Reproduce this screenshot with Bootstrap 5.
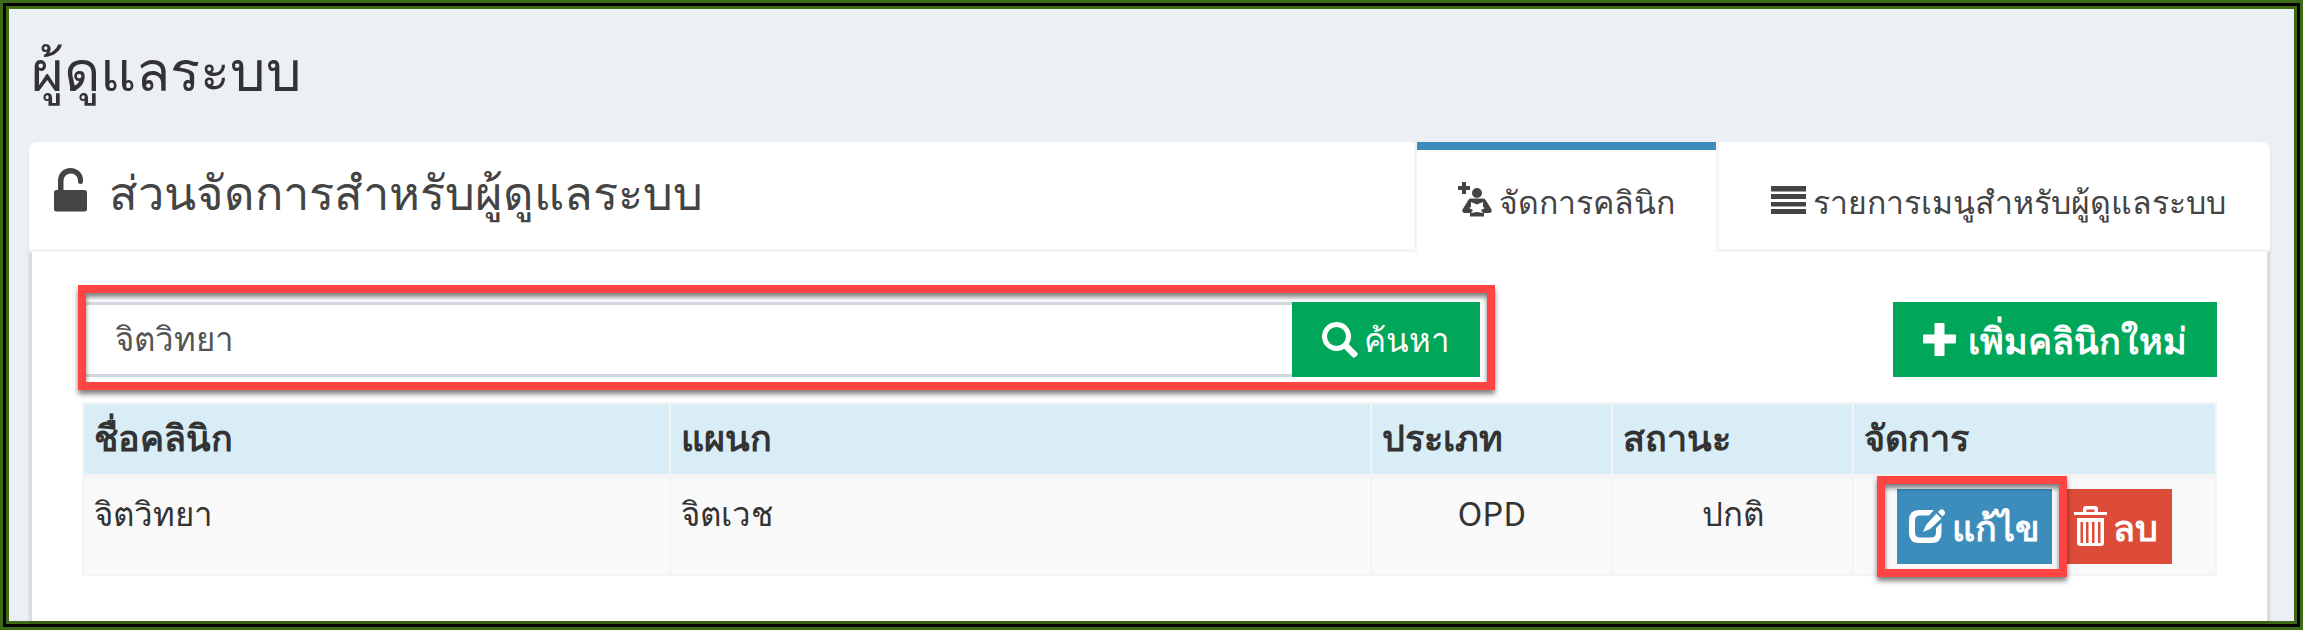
<!DOCTYPE html>
<html lang="th">
<head>
<meta charset="utf-8">
<meta name="viewport" content="width=device-width, initial-scale=1">
<title>ผู้ดูแลระบบ</title>
<link rel="stylesheet" href="https://cdn.jsdelivr.net/npm/bootstrap@5.3.0/dist/css/bootstrap.min.css">
<style>
:root { --line: #f4f4f4; --frame: #3d6b17; --mark-red: #ff4444; }
body { font-family: "Noto Sans CJK SC", sans-serif; font-size: 33px; line-height: 48px; color: #333; }
svg { flex: none; fill: currentColor; }
.app-frame { background: #ecf0f5; border: 3px solid var(--frame); box-shadow: inset 0 0 0 3px #000, inset 0 0 0 6px var(--frame); padding: 6px; }
.page-title { font-size: 56px; line-height: 72px; padding: 22px 22px 39px; margin: 0; }
.panel { margin: 0 24px 0 20px; background: #fff; border-radius: 8px 8px 0 0; box-shadow: 0 3px 3px rgba(0,0,0,.1); }
.panel-top { border-bottom: 3px solid var(--line); color: #444; height: 110px; }
.panel-title { font-size: 47px; line-height: 56px; padding: 20px 0 0 25px; gap: 22px; margin: 0; }
.panel-title svg { margin-top: 6px; }
.tab-link { font-size: 32px; padding: 34px 41px 0; gap: 7px; color: #444; text-decoration: none; border: 3px solid transparent; border-width: 0 3px; height: 107px; }
.tab-link svg { margin-top: 6px; }
.tab-link.active { border-color: var(--line); height: 110px; background: linear-gradient(#3c8dbc, #3c8dbc) 0 0 / 100% 8px no-repeat border-box, #fff; }
.panel-main { border: 3px solid #ddd; border-width: 0 3px; padding: 50px 50px 40px; }
.callout { position: absolute; z-index: 2; border: 8px solid var(--mark-red); box-shadow: 0 4px 5px rgba(0,0,0,.5), inset 0 4px 5px rgba(0,0,0,.5); pointer-events: none; }
.find-box { width: 65.5%; }
.find-box .callout { inset: -17px -15px -13px -4px; }
.find-input { height: 75px; border: 3px solid #d2d6de; border-right: 0; padding: 0 30px; font-size: 33px; color: #555; border-radius: 0; }
.act { height: 75px; border: 0; border-radius: 0; color: #fff; font-size: 33px; line-height: 48px; padding: 0 30px; gap: 6px; display: inline-flex; align-items: center; white-space: nowrap; }
.act span { margin-bottom: 3px; }
.act.fw-bold { font-size: 36px; }
.act-green { background: #00a65a; }
.act-add { gap: 12px; }
.act-blue { background: #3c8dbc; padding: 0 12px; }
.act-red { background: #dd4b39; padding: 0 14px; }
.edit-wrap .callout { inset: -13px -15px -13px -20px; }
.grid-table { margin: 25px 0 0; width: 100%; table-layout: fixed; border-collapse: collapse; color: #333; }
.grid-table th, .grid-table td { border: 2px solid var(--line); padding: 10px; vertical-align: top; line-height: 46px; }
.grid-table th { background: #d9edf7; border-bottom-width: 5px; font-size: 36px; padding: 8px 10px 16px; }
.grid-table td { background: #f9f9f9; }
</style>
</head>
<body>
<main class="app-frame d-flex flex-column min-vh-100">
  <h1 class="page-title fw-normal">ผู้ดูแลระบบ</h1>
  <section class="panel flex-grow-1 d-flex flex-column">
    <div class="panel-top d-flex justify-content-between">
      <h2 class="panel-title d-flex fw-normal">
        <svg width="33" height="44" viewBox="0 0 33 44" aria-hidden="true"><path d="M3 22h1V13C4 5 9.500 0 16.500 0S29 5 29 12v1.500a2.500 2.500 0 0 1-5 0V13c0-4.500-3-7.500-7-7.500S9.500 8.500 9.500 13v9H30.500a2.500 2.500 0 0 1 2.500 2.500V41a2.500 2.500 0 0 1-2.500 2.500h-28A2.500 2.500 0 0 1 0 41V24.500A2.500 2.500 0 0 1 2.500 22z"/></svg>
        <span>ส่วนจัดการสำหรับผู้ดูแลระบบ</span>
      </h2>
      <nav class="d-flex">
        <a href="#" class="tab-link active d-flex">
          <svg width="34" height="35" viewBox="0 0 34 35" aria-hidden="true"><path d="M4 0h4v4h4v4H8v4H4V8H0V4h4z"/><circle cx="19" cy="11" r="5"/><path fill-rule="evenodd" d="M12.500 16.500h13q1.500 0 2.500 2l5.500 9q1 2.500-1.500 3.500h-6v3.500H12V31H6q-2.500-1-1.500-3.500l5.500-9q1-2 2.500-2zM13 20v5l-2 1 4 2-2 3 6-1 6 1-2-3 4-2-2-1v-5l-6 2.500z"/></svg>
          <span>จัดการคลินิก</span>
        </a>
        <a href="#" class="tab-link d-flex ms-2">
          <svg width="35" height="35" viewBox="0 0 35 35" aria-hidden="true"><path d="M0 4h35v5.500H0zM0 12h35v5H0zM0 20h35v4.500H0zM0 27h35v5H0z"/></svg>
          <span>รายการเมนูสำหรับผู้ดูแลระบบ</span>
        </a>
      </nav>
    </div>
    <div class="panel-main flex-grow-1">
      <div class="d-flex justify-content-between">
        <form class="find-box position-relative d-flex">
          <input type="search" class="find-input form-control flex-grow-1" aria-label="ค้นหาคลินิก" value="จิตวิทยา">
          <button type="button" class="act act-green">
            <svg width="36" height="36" viewBox="0 0 36 36" aria-hidden="true"><path fill-rule="evenodd" d="M14.500 0a14.500 14.500 0 0 1 12.300 22.200l8.200 8.200q1.600 1.600 0 3.200l-1.400 1.400q-1.600 1.600-3.200 0l-8.200-8.200A14.500 14.500 0 1 1 14.500 0zm0 5a9.500 9.500 0 1 0 0 19 9.500 9.500 0 0 0 0-19z"/></svg>
            <span>ค้นหา</span>
          </button>
          <span class="callout"></span>
        </form>
        <button type="button" class="act act-green act-add fw-bold">
          <svg width="33" height="33" viewBox="0 0 33 33" aria-hidden="true"><path d="M12.500 0h8a1 1 0 0 1 1 1v10.500H32a1 1 0 0 1 1 1v7a1 1 0 0 1-1 1H21.500V32a1 1 0 0 1-1 1h-8a1 1 0 0 1-1-1V20.500H1a1 1 0 0 1-1-1v-7a1 1 0 0 1 1-1h10.500V1a1 1 0 0 1 1-1z"/></svg>
          <span>เพิ่มคลินิกใหม่</span>
        </button>
      </div>
      <table class="grid-table">
        <colgroup><col style="width:27.5%"><col style="width:32.9%"><col style="width:11.3%"><col style="width:11.3%"><col style="width:17%"></colgroup>
        <thead><tr><th scope="col">ชื่อคลินิก</th><th scope="col">แผนก</th><th scope="col">ประเภท</th><th scope="col">สถานะ</th><th scope="col">จัดการ</th></tr></thead>
        <tbody>
          <tr>
            <td>จิตวิทยา</td>
            <td>จิตเวช</td>
            <td class="text-center">OPD</td>
            <td class="text-center">ปกติ</td>
            <td>
              <div class="d-flex justify-content-center gap-2">
                <div class="edit-wrap position-relative d-flex">
                  <button type="button" class="act act-blue fw-bold">
                    <svg width="37" height="36" viewBox="0 0 37 36" aria-hidden="true"><path d="M10 1h15l-5 5.500h-9Q6 6.500 6 11.500v12q0 5 5 5h11q5 0 5-5V19l5.500-5.500V24q0 10-10 10H10Q0 34 0 24V11Q0 1 10 1z"/><path d="M14 23l3-7L27.500 4.500l5 5L21 20zM29 3l2-2q2-1.500 4 .5t.5 4l-2 2z"/></svg>
                    <span>แก้ไข</span>
                  </button>
                  <span class="callout"></span>
                </div>
                <button type="button" class="act act-red fw-bold">
                  <svg width="33" height="41" viewBox="0 0 33 41" aria-hidden="true"><path fill-rule="evenodd" d="M0 6h9V3q0-3 3-3h9q3 0 3 3v3h9v3H0zM12.500 3.500V6h8V3.500zM3 12h27v25q0 3-3 3H6q-3 0-3-3zM6.500 16v21H9V16zM12 16v21h2.500V16zM18 16v21h2.500V16zM24 16v21h2.500V16z"/></svg>
                  <span>ลบ</span>
                </button>
              </div>
            </td>
          </tr>
        </tbody>
      </table>
    </div>
  </section>
</main>
<script src="https://cdn.jsdelivr.net/npm/bootstrap@5.3.0/dist/js/bootstrap.bundle.min.js"></script>
</body>
</html>
